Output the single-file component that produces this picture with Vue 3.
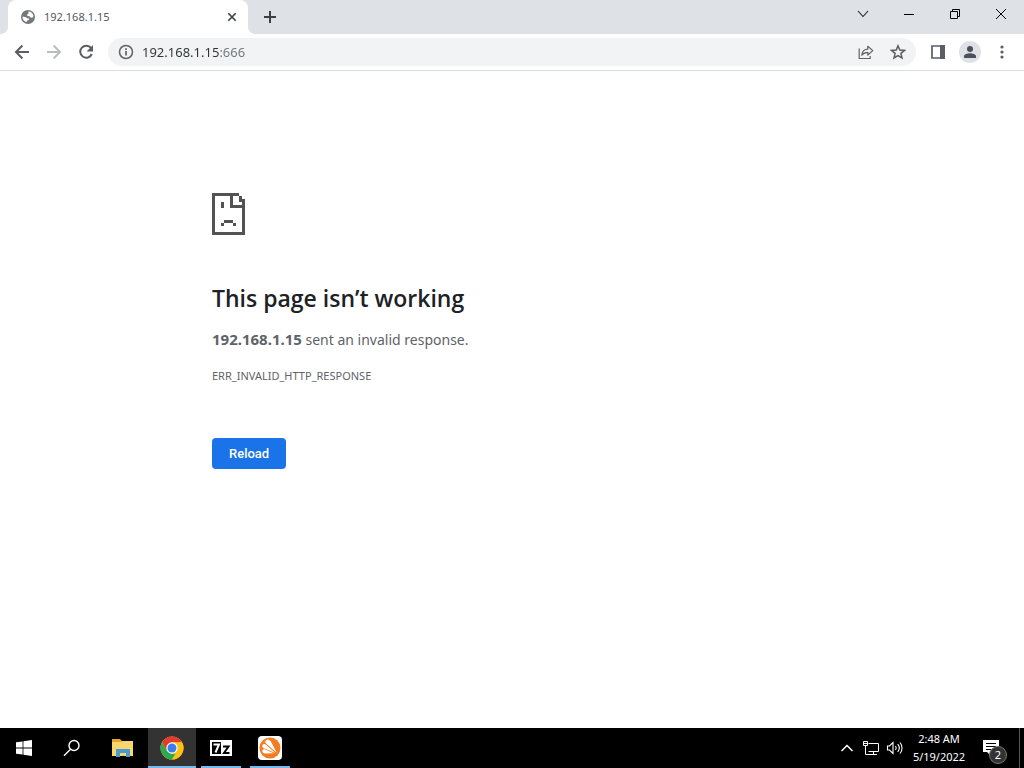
<script setup>
import { computed, ref } from 'vue';

const url = ref('192.168.1.15:666');
const host = computed(() => url.value.split(':')[0]);

const apps = ref([
    { id: 'explorer', label: 'File Explorer', open: false, active: false },
    { id: 'chrome', label: 'Google Chrome', open: true, active: true },
    { id: 'sevenzip', label: '7-Zip', open: true, active: false },
    { id: 'avast', label: 'Avast', open: true, active: false }
]);

const activate = (app) => {
    apps.value.forEach((item) => item.active = item.id === app.id);
    app.open = true;
}
</script>

<template>
    <div class="desktop">
        <header class="tab-strip">
            <div class="tab">
                <svg class="globe" width="14" height="14" viewBox="0 0 14 14">
                    <circle cx="7" cy="7" r="7" fill="#74777b" />
                    <path d="M1.6 6.6 5 7.2l1.6 1.2 1.6.2-.4 1.5-1.9.6-.3 1.5A5.5 5.5 0 0 1 1.6 6.6zM7.2 1.6c3 0 4.800 2 5.200 4.400l-.9 1.700-2.100-.2-.8-1.300-2.200-.3-.3-1.400 1.500-.7z" fill="#fff" />
                </svg>
                <span class="tab-title">{{ host }}</span>
                <button class="tab-close" aria-label="Close tab">
                    <svg width="10" height="10" viewBox="0 0 10 10">
                        <path d="m1.3 1.3 7.4 7.4m0-7.4L1.3 8.7" stroke="#3c4043" stroke-width="1.6" />
                    </svg>
                </button>
            </div>
            <button class="new-tab" aria-label="New tab">
                <svg width="12" height="12" viewBox="0 0 12 12">
                    <path d="M6 0v12M0 6h12" stroke="#3c4043" stroke-width="2" />
                </svg>
            </button>
            <div class="window-controls">
                <button aria-label="Search tabs">
                    <svg width="12" height="12" viewBox="0 0 12 12">
                        <path d="m1 3 5 5.5L11 3" fill="none" stroke="#202124" stroke-width="1.1" />
                    </svg>
                </button>
                <button aria-label="Minimize">
                    <svg width="10" height="10" viewBox="0 0 10 10">
                        <path d="M0 5.5h10" stroke="#000" />
                    </svg>
                </button>
                <button aria-label="Restore">
                    <svg width="10" height="10" viewBox="0 0 10 10">
                        <path d="M.5 2.5h7v7h-7zM2.5 2.5v-2h7v7h-2" fill="none" stroke="#000" />
                    </svg>
                </button>
                <button aria-label="Close">
                    <svg width="10" height="10" viewBox="0 0 10 10">
                        <path d="m0 0 10 10m0-10L0 10" stroke="#000" />
                    </svg>
                </button>
            </div>
        </header>

        <nav class="toolbar">
            <button class="tool" aria-label="Back">
                <svg width="16" height="16" viewBox="0 0 16 16">
                    <path d="M15 8H2m6.4-6.5L2 8l6.4 6.5" fill="none" stroke="#5a5e62" stroke-width="2" />
                </svg>
            </button>
            <button class="tool" aria-label="Forward" disabled>
                <svg width="16" height="16" viewBox="0 0 16 16">
                    <path d="M1 8h13M7.6 1.5 14 8l-6.4 6.5" fill="none" stroke="#b9bcbf" stroke-width="2" />
                </svg>
            </button>
            <button class="tool" aria-label="Reload this page">
                <svg width="16" height="16" viewBox="0 0 16 16">
                    <path d="M13.1 4.2A6 6 0 1 0 13.8 10" fill="none" stroke="#5a5e62" stroke-width="2" />
                    <path d="M15 1v6.4H8.6z" fill="#5a5e62" />
                </svg>
            </button>
            <div class="omnibox">
                <svg width="16" height="16" viewBox="0 0 16 16">
                    <circle cx="8" cy="8" r="6.5" fill="none" stroke="#5f6368" stroke-width="1.5" />
                    <path d="M8 7v4.6M8 4.2V6" stroke="#5f6368" stroke-width="1.7" />
                </svg>
                <input v-model="url" class="url" type="text" aria-label="Address bar" spellcheck="false">
                <button class="tool" aria-label="Share this page">
                    <svg width="16" height="16" viewBox="0 0 16 16">
                        <path d="M1.2 4.5v10h11v-2.6" fill="none" stroke="#5f6368" stroke-width="1.2" />
                        <path d="M3.8 11.2c.5-4 2.6-6 6-6V2.3l5 4.3-5 4.4V8.3c-2.6 0-4.4.8-6 2.9z" fill="none" stroke="#5f6368" stroke-width="1.2" stroke-linejoin="round" />
                    </svg>
                </button>
                <button class="tool" aria-label="Bookmark this tab">
                    <svg width="16" height="16" viewBox="0 0 16 16">
                        <path d="m8 1.8 1.8 4.2 4.7.4-3.6 3 1.1 4.5-4-2.4-4 2.4 1.1-4.5-3.6-3L6.2 6z" fill="none" stroke="#5a5e62" stroke-width="1.5" />
                    </svg>
                </button>
            </div>
            <button class="tool" aria-label="Side panel">
                <svg width="14" height="14" viewBox="0 0 14 14">
                    <path d="M1 1h12v12H1z" fill="none" stroke="#5a5e62" stroke-width="1.7" />
                    <path d="M9 0h5v14H9z" fill="#5a5e62" />
                </svg>
            </button>
            <button class="tool" aria-label="Profile">
                <svg width="22" height="22" viewBox="0 0 22 22">
                    <circle cx="11" cy="11" r="11" fill="#dee1e6" />
                    <circle cx="11" cy="8" r="3" fill="#4a5058" />
                    <path d="M5 17v-1.8c0-2 3.5-3 6-3s6 1 6 3V17z" fill="#4a5058" />
                </svg>
            </button>
            <button class="tool" aria-label="Menu">
                <svg width="4" height="14" viewBox="0 0 4 14" fill="#5a5e62">
                    <circle cx="2" cy="2" r="1.6" />
                    <circle cx="2" cy="7" r="1.6" />
                    <circle cx="2" cy="12" r="1.6" />
                </svg>
            </button>
        </nav>

        <main class="page">
            <section class="error">
                <svg class="sad-file" width="33" height="42" viewBox="0 0 11 14" shape-rendering="crispEdges">
                    <path d="M0 0h9v1h1v1h1v12H0zM1 1v12h9V5H6V1zM7 1v3h3V3H9V1zM3 3h1v2H3zM4 9h3v1H4zM3 10h1v1H3zM7 10h1v1H7z" fill="#535353" fill-rule="evenodd" />
                </svg>
                <h1>This page isn’t working</h1>
                <p class="summary"><strong>{{ host }}</strong> sent an invalid response.</p>
                <p class="code">ERR_INVALID_HTTP_RESPONSE</p>
                <button class="reload">Reload</button>
            </section>
        </main>

        <footer class="taskbar">
            <button class="task" aria-label="Start">
                <svg width="16" height="16" viewBox="0 0 16 16" fill="#fff">
                    <path d="m0 2.300 6.600-.9v6.200H0zM7.400 1.300 16 0v7.600H7.400zM0 8.400h6.600v6.200L0 13.700zM7.400 8.400H16V16l-8.600-1.300z" />
                </svg>
            </button>
            <button class="task" aria-label="Search">
                <svg width="18" height="18" viewBox="0 0 18 18" fill="none" stroke="#fff" stroke-width="1.4">
                    <circle cx="11" cy="6.5" r="5" />
                    <path d="M7.500 10.200 1 16.700" />
                </svg>
            </button>
            <div class="apps">
                <button
                    v-for="app in apps"
                    :key="app.id"
                    class="task"
                    :class="{ open: app.open, active: app.active }"
                    :aria-label="app.label"
                    @click="activate(app)"
                >
                    <svg v-if="app.id === 'explorer'" width="22" height="18" viewBox="0 0 22 18">
                        <path d="M0 0h8l2 2h11v15H0z" fill="#e0a92e" />
                        <path d="M0 3h9l2-1h10v15H0z" fill="#f9d76c" />
                        <path d="M4 10h14v8h-4v-4H8v4H4z" fill="#4a9bd4" />
                    </svg>
                    <svg v-else-if="app.id === 'chrome'" width="24" height="24" viewBox="0 0 24 24">
                        <circle cx="12" cy="12" r="11.5" fill="#fbc116" />
                        <path d="M2.04 6.25A11.5 11.5 0 0 1 21.96 6.25H12L7 14.9z" fill="#e33b2e" />
                        <path d="M2.04 6.25 7.02 14.88 12 17.75h5L12 23.5A11.5 11.5 0 0 1 2.04 6.25z" fill="#2da94f" />
                        <path d="M21.96 6.25A11.5 11.5 0 0 1 12 23.5l4.98-8.62L12 6.25z" fill="#fbc116" />
                        <circle cx="12" cy="12" r="5.7" fill="#fff" />
                        <circle cx="12" cy="12" r="4.5" fill="#3b7ded" />
                    </svg>
                    <svg v-else-if="app.id === 'sevenzip'" width="22" height="16" viewBox="0 0 22 16">
                        <path d="M0 0h22v16H0z" fill="#fff" />
                        <path d="M2 2h9v12H2z" fill="#000" />
                        <path d="M3.5 4.5H9l-3.5 8" fill="none" stroke="#fff" stroke-width="2" />
                        <path d="M13 6.5h5.5L14 13h5.5" fill="none" stroke="#000" stroke-width="2" />
                    </svg>
                    <svg v-else width="24" height="24" viewBox="0 0 24 24">
                        <rect width="24" height="24" rx="4" fill="#fff" />
                        <circle cx="12" cy="12" r="10.5" fill="#f47b20" />
                        <path d="M8.5 3.8c2-.8 3.7.2 4.7 2.2l5.5 10.8-10.9-9.600c-1-1-.7-2.800.7-3.400zM4.600 8.800c.8-1.200 2.300-1.100 3.500-.1l9.300 8.400-11.800-4.800c-1.300-.7-1.700-2.300-1-3.500zM4.400 14.600c.3-1.200 1.500-1.500 2.800-1.200l8.500 3.900-8.800.3c-1.600 0-2.800-1.500-2.500-3z" fill="#fff" />
                    </svg>
                </button>
            </div>

            <div class="tray">
                <button class="tray-icon" aria-label="Show hidden icons">
                    <svg width="14" height="10" viewBox="0 0 14 10">
                        <path d="M1.5 8 7 2.5 12.5 8" fill="none" stroke="#fff" stroke-width="1.5" />
                    </svg>
                </button>
                <button class="tray-icon" aria-label="Network">
                    <svg width="16" height="16" viewBox="0 0 16 16" fill="none" stroke="#fff">
                        <path d="M5.5 3.5h10v8h-10M10.5 11.5v3M6 14.5h8M.5 1.5h4v4h-4zM2.5 5.5v9H6M1 3.5h3" />
                    </svg>
                </button>
                <button class="tray-icon" aria-label="Volume">
                    <svg width="18" height="16" viewBox="0 0 18 16" fill="none" stroke="#fff" stroke-width="1.1">
                        <path d="M1.5 6h2L7 2.5v11L3.5 10h-2zM9.5 6c.9 1.200.9 2.800 0 4M11.700 4.200c1.900 2.200 1.900 5.400 0 7.600M14 2.500c2.700 3.200 2.700 7.800 0 11" />
                    </svg>
                </button>
                <button class="clock">
                    <span>2:48 AM</span>
                    <span>5/19/2022</span>
                </button>
                <button class="notifications" aria-label="Notifications">
                    <svg width="16" height="16" viewBox="0 0 16 16">
                        <path d="M0 0h16v12H7.5v3.5L4 12H0z" fill="#fff" />
                        <path d="M3 3.5h10M3 6.5h10M3 9.5h7" stroke="#000" />
                    </svg>
                    <span class="count">2</span>
                </button>
                <button class="show-desktop" aria-label="Show desktop"></button>
            </div>
        </footer>
    </div>
</template>

<style>
body {
    margin: 0;
    background-color: #fff;
}
</style>

<style scoped>
.desktop {
    display: flex;
    flex-direction: column;
    min-height: 100vh;
    font-family: "Noto Sans", "Open Sans", sans-serif;
    color: #202124;
}

button {
    display: flex;
    align-items: center;
    justify-content: center;
    padding: 0;
    border: 0;
    background: none;
    color: inherit;
    font-family: inherit;
}

svg {
    display: block;
    flex-shrink: 0;
}

.tab-strip {
    display: flex;
    height: 34px;
    padding-left: 8px;
    background-color: #dee1e6;
}

.tab {
    position: relative;
    display: flex;
    align-items: center;
    box-sizing: border-box;
    width: 240px;
    padding: 0 8px 0 13px;
    border-radius: 8px 8px 0 0;
    background-color: #fff;
}

.tab::before,
.tab::after {
    content: '';
    position: absolute;
    bottom: 0;
    width: 8px;
    height: 8px;
}

.tab::before {
    right: 100%;
    background: radial-gradient(circle at 0 0, transparent 8px, #fff 8px);
}

.tab::after {
    left: 100%;
    background: radial-gradient(circle at 100% 0, transparent 8px, #fff 8px);
}

.tab-title {
    flex: 1;
    margin-left: 9px;
    color: #54585c;
    font-size: 11px;
    line-height: 14px;
}

.tab-close {
    width: 16px;
    height: 16px;
}

.new-tab {
    width: 28px;
    margin-left: 8px;
}

.window-controls {
    display: flex;
    height: 28px;
    margin-left: auto;
}

.window-controls button {
    width: 46px;
}

.toolbar {
    display: flex;
    align-items: center;
    height: 36px;
    padding: 0 6px;
    border-bottom: 1px solid #dadce0;
    background-color: #fff;
}

.tool {
    width: 32px;
    height: 28px;
}

.omnibox {
    display: flex;
    flex: 1;
    align-items: center;
    height: 28px;
    margin: 0 6px;
    padding: 0 2px 0 10px;
    border-radius: 14px;
    background-color: #f1f3f4;
}

/* host is dark, port is dimmed */
.url {
    flex: 1;
    min-width: 0;
    margin-left: 8px;
    padding: 0;
    border: 0;
    outline: 0;
    background: linear-gradient(to right, #303438 77px, #73777b 77px);
    background-clip: text;
    color: transparent;
    caret-color: #202124;
    font-family: inherit;
    font-size: 13px;
}

.page {
    flex: 1;
    padding: 0 24px;
    background-color: #fff;
}

.error {
    max-width: 600px;
    margin: 0 auto;
    padding: 122px 0 40px;
    color: #5f6368;
}

.error h1 {
    margin: 47px 0 0;
    color: #202124;
    font-family: "Open Sans", "Noto Sans", sans-serif;
    font-size: 23px;
    font-weight: 600;
    line-height: 32px;
}

.summary {
    margin: 15px 0 0;
    font-size: 14px;
    line-height: 20px;
}

.summary strong {
    font-size: 15px;
}

.code {
    margin: 16px 0 0;
    font-size: 11px;
    line-height: 20px;
}

.reload {
    height: 31px;
    margin-top: 52px;
    padding: 0 17px;
    border-radius: 4px;
    background-color: #1a73e8;
    color: #fff;
    font-family: Roboto, sans-serif;
    font-size: 13px;
    font-weight: 500;
}

.taskbar {
    display: flex;
    height: 40px;
    background-color: #000;
    color: #fff;
}

.apps {
    display: flex;
    gap: 1px;
    margin-left: 3px;
}

.task {
    position: relative;
    width: 48px;
}

.task.open::after {
    content: '';
    position: absolute;
    right: 4px;
    bottom: 0;
    left: 4px;
    height: 2px;
    background-color: #76b9ed;
}

.task.active {
    background-color: #333;
}

.task.active::after {
    right: 0;
    left: 0;
}

.tray {
    display: flex;
    margin-left: auto;
}

.tray-icon {
    width: 24px;
}

.clock {
    flex-direction: column;
    width: 64px;
    font-size: 11px;
    line-height: 18px;
}

.notifications {
    position: relative;
    width: 48px;
    padding-right: 8px;
}

.count {
    position: absolute;
    right: 12px;
    bottom: 4px;
    width: 16px;
    height: 16px;
    border: 1px solid #777;
    border-radius: 50%;
    background-color: #333;
    font-size: 11px;
    line-height: 16px;
}

.show-desktop {
    width: 5px;
    border-left: 1px solid #555;
}
</style>
